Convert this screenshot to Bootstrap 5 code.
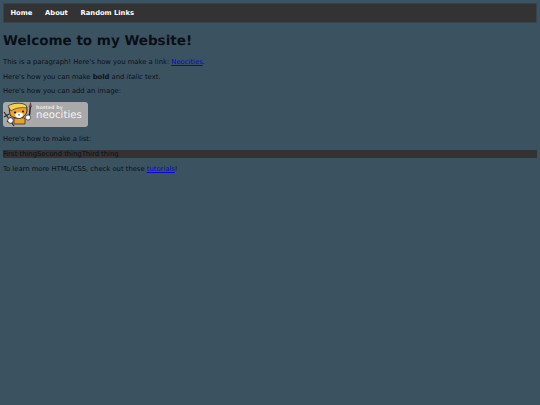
<!DOCTYPE html>
<html lang="en">
<head>
<meta charset="utf-8">
<title>Welcome</title>
<link href="https://cdn.jsdelivr.net/npm/bootstrap@5.3.0/dist/css/bootstrap.min.css" rel="stylesheet">
<style>
html,body{height:100%}
body{background:#3b5261;color:#0c1118;font-family:"DejaVu Sans",sans-serif;font-size:6.8px;line-height:8px;padding:3.4px 3px;text-rendering:geometricPrecision}
.topbar{background:#333;height:20px;border:1px solid #34434f;margin:0}
.topbar a{color:#fff;font-weight:700;font-size:6.75px;text-decoration:none;padding:0 6.4px;line-height:18px;display:block}
.heading-main{font-size:13.5px;font-weight:700;margin:9.6px 0 9px;line-height:16px;color:#0a0f16}
.txt{margin:0 0 6.75px;line-height:8px}
.txt a{color:#0808d0}
.logo-box{width:85px;height:25px;margin-bottom:8px;background:#a9a9a9;border-radius:3px;position:relative;display:block}
.logo-box svg{position:absolute;left:0;top:0}
.hosted{position:absolute;left:33px;top:2.5px;font-size:4.8px;line-height:7px;color:#e4e4e4;font-weight:700}
.neo{position:absolute;left:33px;top:5.5px;font-size:10.2px;line-height:16px;color:#f4f4f4}
.strip{background:#333;margin:0 0 6.75px;padding:0;height:8px;line-height:8px;list-style:none;display:flex}
.strip li{color:#0c1118}
</style>
</head>
<body>
<nav class="topbar d-flex align-items-center">
  <ul class="nav">
    <li class="nav-item"><a href="#">Home</a></li>
    <li class="nav-item"><a href="#">About</a></li>
    <li class="nav-item"><a href="#">Random Links</a></li>
  </ul>
</nav>
<h1 class="heading-main">Welcome to my Website!</h1>
<p class="txt">This is a paragraph! Here's how you make a link: <a href="#">Neocities</a>.</p>
<p class="txt">Here's how you can make <strong>bold</strong> and <em>italic</em> text.</p>
<p class="txt">Here's how you can add an image:</p>
<div class="logo-box">
  <svg width="34" height="25" viewBox="0 0 34 25">
    <path d="M1 10l10 14M1 15l5-3M4 20l4-5" stroke="#2a2a2a" stroke-width="1.2" fill="none"/>
    <path d="M11 16h11v6h-11z" fill="#e8a030" stroke="#222" stroke-width=".7"/>
    <circle cx="7.5" cy="18.5" r="2.8" fill="#fff" stroke="#222" stroke-width=".8"/>
    <path d="M6 5c3-4 13-5 17-1 2 3 1 9-3 11-5 2-10 1-13-2z" fill="#f0a030" stroke="#222" stroke-width=".9"/>
    <path d="M5 4c5-3 12-4 18-1l1 3c-6-1-12 0-16 3z" fill="#f4d24a" stroke="#222" stroke-width=".6"/>
    <path d="M12 12c2-2 6-2 8 0 0 3-2 4-4 4s-4-1-4-4z" fill="#fff"/>
    <circle cx="12" cy="10.5" r="1" fill="#111"/><circle cx="20" cy="9.5" r="1" fill="#111"/>
    <path d="M15 12.5h2l-1 1.200z" fill="#111"/>
    <path d="M26.500 13l.8-8" stroke="#222" stroke-width="1.5"/>
    <path d="M26.300 5l1.200-4.500 1 4.500z" fill="#b03040" stroke="#222" stroke-width=".4"/>
    <circle cx="25" cy="15.500" r="2.600" fill="#fff" stroke="#222" stroke-width=".7"/>
  </svg>
  <span class="hosted">hosted by</span>
  <span class="neo">neocities</span>
</div>
<p class="txt">Here's how to make a list:</p>
<ul class="strip">
  <li>First thing</li>
  <li>Second thing</li>
  <li>Third thing</li>
</ul>
<p class="txt">To learn more HTML/CSS, check out these <a href="#">tutorials</a>!</p>
<script src="https://cdn.jsdelivr.net/npm/bootstrap@5.3.0/dist/js/bootstrap.bundle.min.js"></script>
</body>
</html>
